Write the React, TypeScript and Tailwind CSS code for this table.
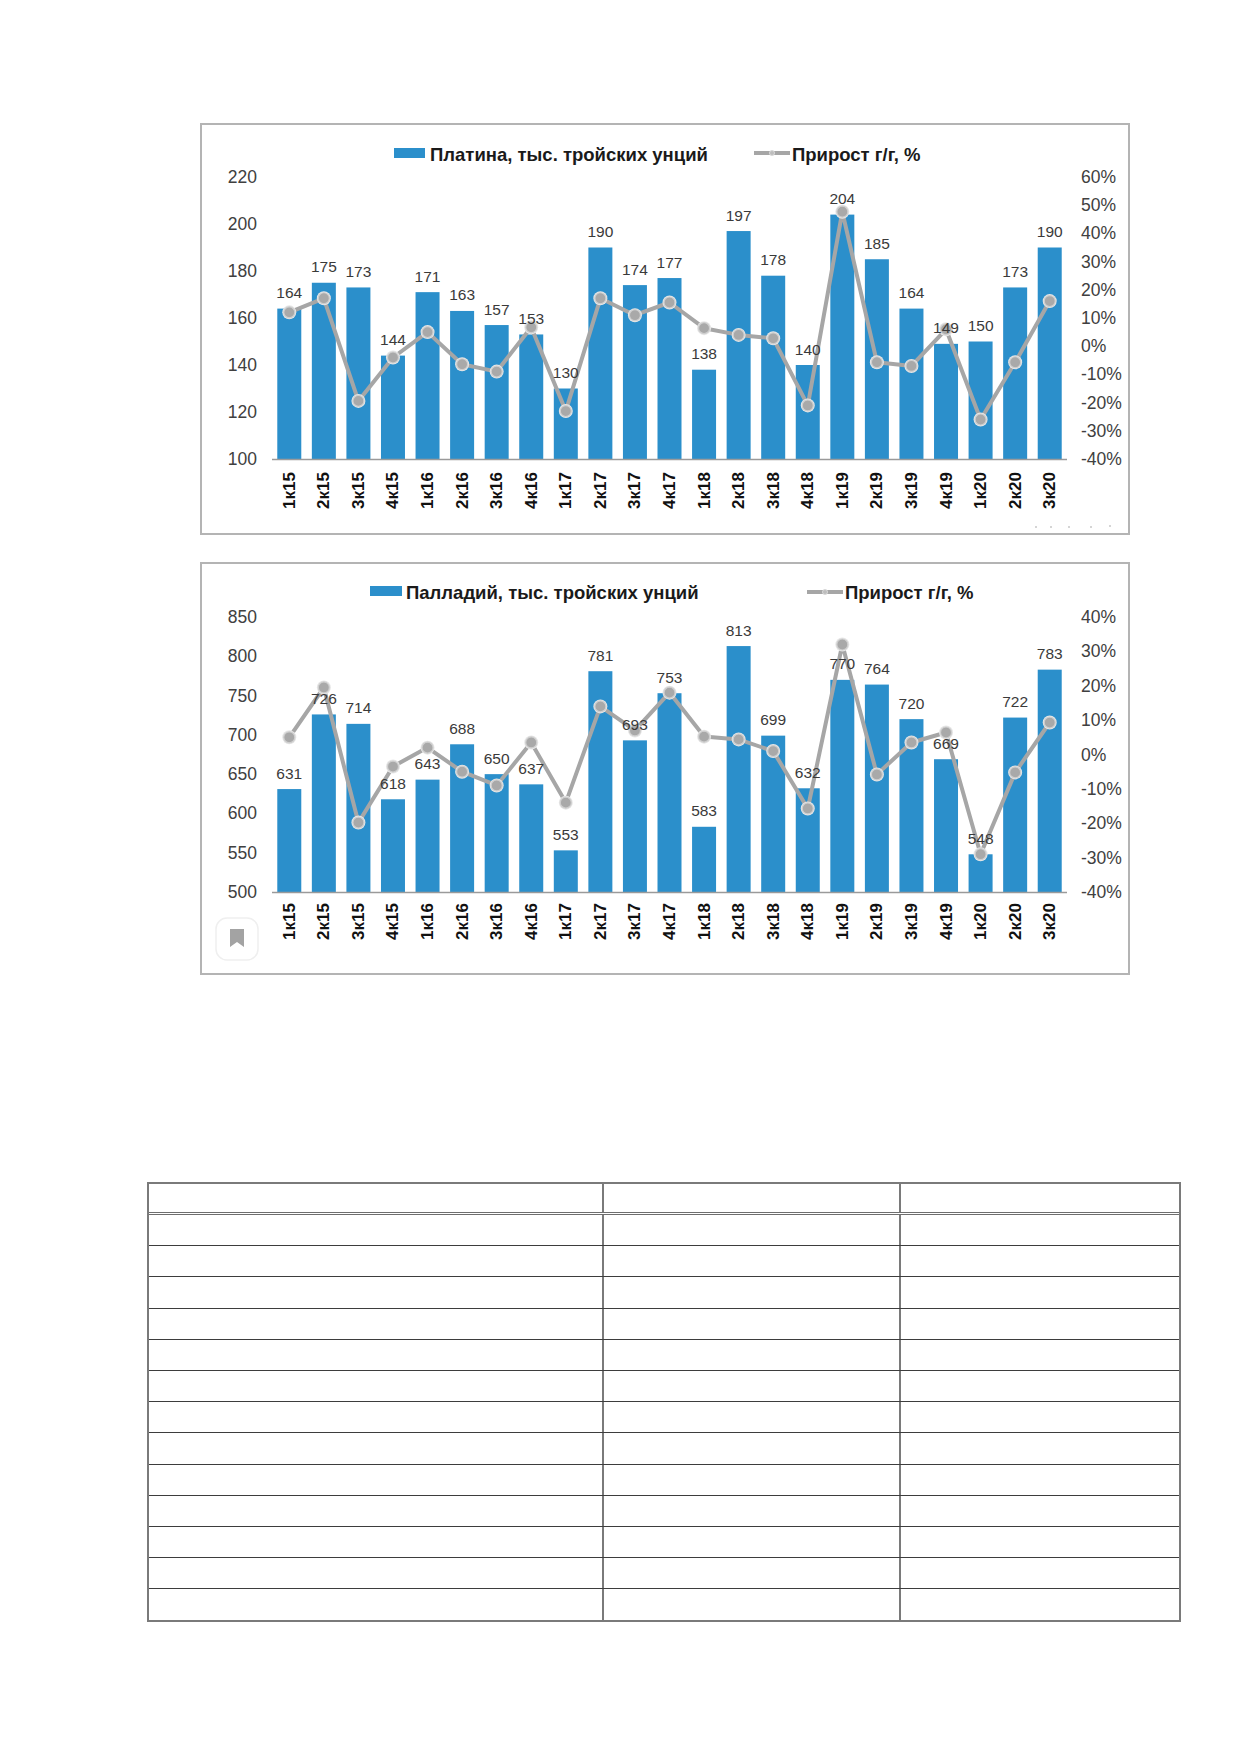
import React from "react";

const QUARTERS = [
  "1к15", "2к15", "3к15", "4к15",
  "1к16", "2к16", "3к16", "4к16",
  "1к17", "2к17", "3к17", "4к17",
  "1к18", "2к18", "3к18", "4к18",
  "1к19", "2к19", "3к19", "4к19",
  "1к20", "2к20", "3к20",
];

const FONT = '"Liberation Sans", Arial, Helvetica, sans-serif';
const BLUE = "#2b8fcb";
const LINE = "#a6a6a6";

type ChartCfg = {
  originY: number;
  innerH: number;
  yBottom: number;
  yTop: number;
  leftMin: number;
  leftMax: number;
  leftStep: number;
  rightMin: number;
  rightMax: number;
  values: number[];
  pcts: number[];
  legendRect: [number, number, number, number];
  legendText: string;
  legendTextX: number;
  legendBaseline: number;
  lineLegend: [number, number, number];
  lineTextX: number;
  xLabelTop: number;
  bookmark?: boolean;
  watermark?: boolean;
};

const PLOT_LEFT = 272;
const PLOT_RIGHT = 1067;

function Chart({ cfg }: { cfg: ChartCfg }) {
  const n = QUARTERS.length;
  const cat = (PLOT_RIGHT - PLOT_LEFT) / n;
  const barW = 24;
  const yL = (v: number) =>
    cfg.yBottom - ((v - cfg.leftMin) / (cfg.leftMax - cfg.leftMin)) * (cfg.yBottom - cfg.yTop);
  const yR = (p: number) =>
    cfg.yBottom - ((p - cfg.rightMin) / (cfg.rightMax - cfg.rightMin)) * (cfg.yBottom - cfg.yTop);
  const cx = (i: number) => PLOT_LEFT + cat * (i + 0.5);

  const leftTicks: number[] = [];
  for (let v = cfg.leftMin; v <= cfg.leftMax; v += cfg.leftStep) leftTicks.push(v);
  const rightTicks: number[] = [];
  for (let p = cfg.rightMin; p <= cfg.rightMax; p += 10) rightTicks.push(p);

  const pts = cfg.pcts.map((p, i) => `${cx(i).toFixed(1)},${yR(p).toFixed(1)}`).join(" ");

  return (
    <svg
      width={926}
      height={cfg.innerH}
      viewBox={`202 ${cfg.originY} 926 ${cfg.innerH}`}
      className="block"
      style={{ fontFamily: FONT }}
    >
      {/* legend */}
      <rect
        x={cfg.legendRect[0]}
        y={cfg.legendRect[1]}
        width={cfg.legendRect[2]}
        height={cfg.legendRect[3]}
        fill={BLUE}
      />
      <text x={cfg.legendTextX} y={cfg.legendBaseline} fontSize={18.5} fontWeight={700} fill="#1a1a1a">
        {cfg.legendText}
      </text>
      <line
        x1={cfg.lineLegend[0]}
        x2={cfg.lineLegend[1]}
        y1={cfg.lineLegend[2]}
        y2={cfg.lineLegend[2]}
        stroke={LINE}
        strokeWidth={4}
      />
      <circle
        cx={(cfg.lineLegend[0] + cfg.lineLegend[1]) / 2}
        cy={cfg.lineLegend[2]}
        r={2.5}
        fill="#bdbdbd"
        stroke="#d9d9d9"
      />
      <text x={cfg.lineTextX} y={cfg.legendBaseline} fontSize={18.5} fontWeight={700} fill="#1a1a1a">
        Прирост г/г, %
      </text>

      {/* left axis */}
      {leftTicks.map((v) => (
        <text key={v} x={257} y={yL(v) + 6} fontSize={17.5} textAnchor="end" fill="#404040">
          {v}
        </text>
      ))}
      {/* right axis */}
      {rightTicks.map((p) => (
        <text key={p} x={1081} y={yR(p) + 6} fontSize={17.5} fill="#404040">
          {p}%
        </text>
      ))}

      {/* bars */}
      {cfg.values.map((v, i) => (
        <rect
          key={i}
          x={cx(i) - barW / 2}
          y={yL(v)}
          width={barW}
          height={cfg.yBottom - yL(v)}
          fill={BLUE}
        />
      ))}

      {/* axis line */}
      <line
        x1={PLOT_LEFT}
        x2={PLOT_RIGHT}
        y1={cfg.yBottom + 0.5}
        y2={cfg.yBottom + 0.5}
        stroke="#9a9a9a"
        strokeWidth={1.5}
      />

      {/* line */}
      <polyline points={pts} fill="none" stroke={LINE} strokeWidth={4} strokeLinejoin="round" />
      {cfg.pcts.map((p, i) => (
        <g key={i}>
          <circle cx={cx(i)} cy={yR(p)} r={7} fill="#e6e6e6" />
          <circle cx={cx(i)} cy={yR(p)} r={5.5} fill="#a9a9a9" stroke="#cfcfcf" strokeWidth={1.2} />
        </g>
      ))}

      {/* data labels */}
      {cfg.values.map((v, i) => (
        <text
          key={i}
          x={cx(i)}
          y={yL(v) - 10.5}
          fontSize={15.5}
          textAnchor="middle"
          fill="#3a3a3a"
        >
          {v}
        </text>
      ))}

      {/* x labels */}
      {QUARTERS.map((q, i) => (
        <text
          key={q}
          x={cx(i)}
          y={cfg.xLabelTop}
          transform={`rotate(-90 ${cx(i)} ${cfg.xLabelTop})`}
          fontSize={17}
          fontWeight={700}
          textAnchor="end"
          dominantBaseline="central"
          fill="#111"
        >
          {q}
        </text>
      ))}

      {cfg.bookmark && (
        <g>
          <rect x={216} y={918} width={42} height={42} rx={11} fill="#fff" stroke="#efefef" strokeWidth={1.5} />
          <path d="M230 929 h14 v18 l-7 -5 l-7 5 z" fill="#a3a3a3" />
        </g>
      )}
      {cfg.watermark && (
        <g fill="#d5d5d5">
          <rect x={1035} y={526} width={2} height={2} />
          <rect x={1050} y={526} width={2} height={2} />
          <rect x={1068} y={526} width={2} height={2} />
          <rect x={1090} y={526} width={2} height={2} />
          <rect x={1109} y={525} width={2} height={2} />
        </g>
      )}
    </svg>
  );
}

const chart1: ChartCfg = {
  originY: 125,
  innerH: 408,
  yBottom: 459,
  yTop: 177,
  leftMin: 100,
  leftMax: 220,
  leftStep: 20,
  rightMin: -40,
  rightMax: 60,
  values: [164, 175, 173, 144, 171, 163, 157, 153, 130, 190, 174, 177, 138, 197, 178, 140, 204, 185, 164, 149, 150, 173, 190],
  pcts: [12, 17, -19.4, -4, 5, -6.4, -9, 6.7, -23, 17, 11, 15.5, 6.4, 4, 2.8, -21, 47.7, -5.7, -7, 6, -26, -5.7, 16],
  legendRect: [394, 148, 31, 10],
  legendText: "Платина, тыс. тройских унций",
  legendTextX: 430,
  legendBaseline: 161,
  lineLegend: [754, 790, 153],
  lineTextX: 792,
  xLabelTop: 472,
  watermark: true,
};

const chart2: ChartCfg = {
  originY: 564,
  innerH: 409,
  yBottom: 892,
  yTop: 617,
  leftMin: 500,
  leftMax: 850,
  leftStep: 50,
  rightMin: -40,
  rightMax: 40,
  values: [631, 726, 714, 618, 643, 688, 650, 637, 553, 781, 693, 753, 583, 813, 699, 632, 770, 764, 720, 669, 548, 722, 783],
  pcts: [5, 19.5, -19.8, -3.5, 2, -5, -9, 3.5, -14, 14, 7, 18, 5.2, 4.4, 1, -15.7, 32, -5.8, 3.5, 6.4, -29, -5.2, 9.3],
  legendRect: [370, 586, 32, 10],
  legendText: "Палладий, тыс. тройских унций",
  legendTextX: 406,
  legendBaseline: 599,
  lineLegend: [807, 843, 592],
  lineTextX: 845,
  xLabelTop: 903,
  bookmark: true,
};

function Table() {
  const rows = Array.from({ length: 13 });
  return (
    <div className="w-[1034px] border-2 border-[#7a7a7a] bg-white">
      <div className="flex h-[31px] border-b-[3px] border-double border-[#6e6e6e]">
        <div className="w-[455px] border-r-2 border-[#7a7a7a]" />
        <div className="w-[297px] border-r-2 border-[#7a7a7a]" />
        <div className="flex-1" />
      </div>
      {rows.map((_, i) => (
        <div
          key={i}
          className={
            i === rows.length - 1
              ? "flex h-[31.2px]"
              : "flex h-[31.2px] border-b border-[#3d3d3d]"
          }
        >
          <div className="w-[455px] border-r-2 border-[#7a7a7a]" />
          <div className="w-[297px] border-r-2 border-[#7a7a7a]" />
          <div className="flex-1" />
        </div>
      ))}
    </div>
  );
}

export default function App() {
  return (
    <div className="w-[1240px] h-[1754px] bg-white overflow-hidden">
      <div className="pt-[123px] pl-[200px] flex flex-col gap-[27px]">
        <div className="w-[930px] h-[412px] border-2 border-[#b4b4b4] bg-white">
          <Chart cfg={chart1} />
        </div>
        <div className="w-[930px] h-[413px] border-2 border-[#b4b4b4] bg-white">
          <Chart cfg={chart2} />
        </div>
      </div>
      <div className="mt-[207px] ml-[147px]">
        <Table />
      </div>
    </div>
  );
}
